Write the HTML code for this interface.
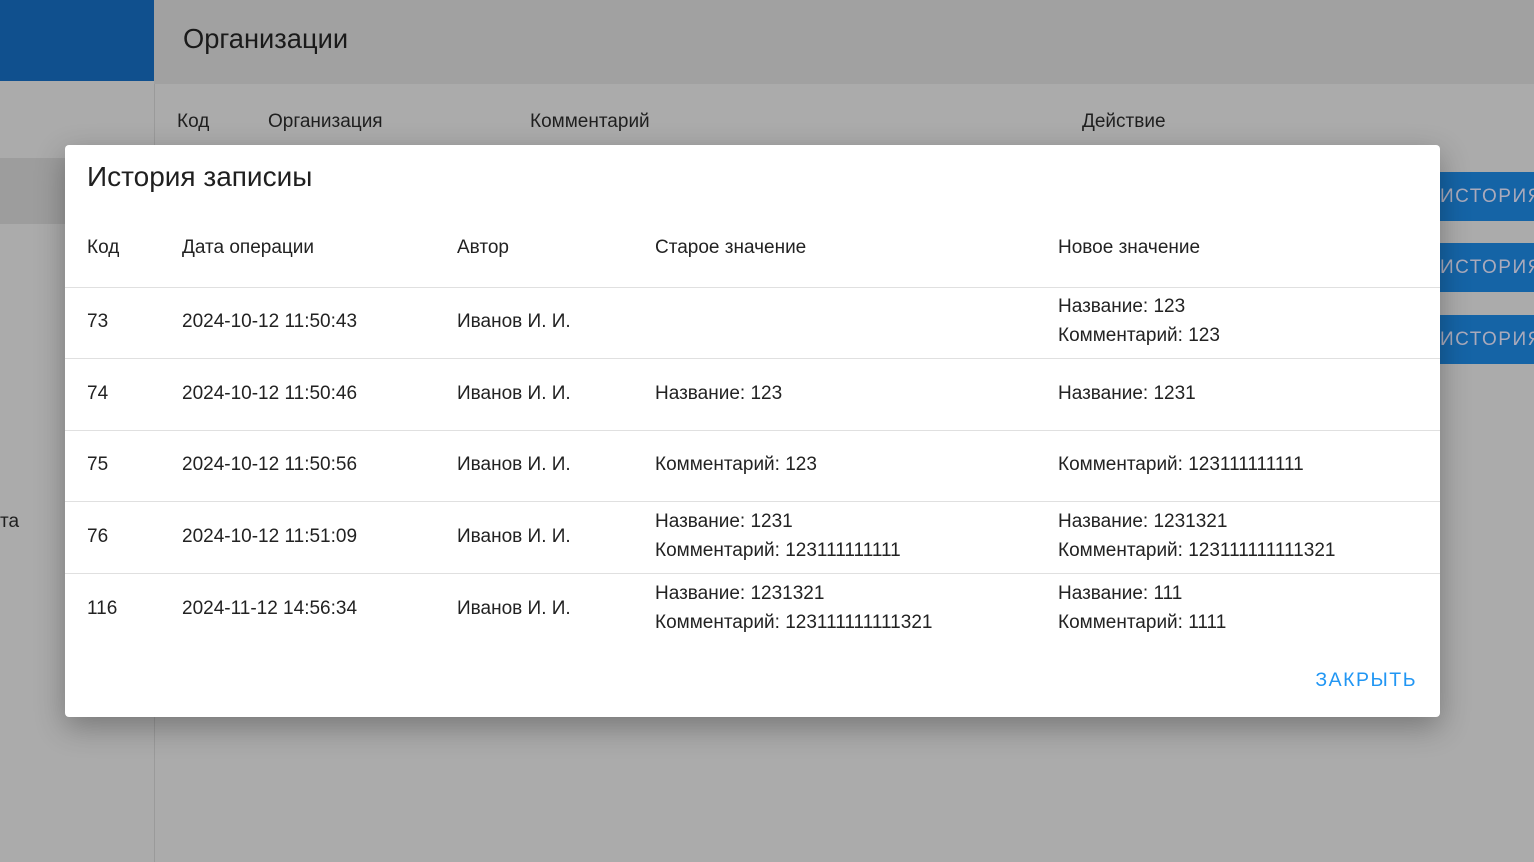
<!DOCTYPE html><html><head><style>
body{margin:0;width:1534px;height:862px;overflow:hidden;background:#ababab;font-family:"Liberation Sans",sans-serif;position:relative;color:#1f1f1f}
.a{position:absolute}
.row{position:absolute;left:0;right:0;border-top:1px solid #e0e0e0}
.c{position:absolute;font-size:19px;color:#222;line-height:29px}
</style></head><body>
<div class="a" style="left:0;top:0;width:154px;height:81px;background:#10508e"></div>
<div class="a" style="left:154px;top:0;right:0;height:84px;background:#a1a1a1"></div>
<div class="a" style="left:183px;top:23px;font-size:27.3px;color:#1a1a1a">Организации</div>
<div class="a" style="left:154px;top:84px;width:1px;bottom:0;background:#9a9a9a"></div>
<div class="a" style="left:0;top:158px;width:154px;height:66px;background:#9d9d9d"></div>
<div class="a" style="left:177px;top:111px;font-size:19px">Код</div>
<div class="a" style="left:268px;top:111px;font-size:19px">Организация</div>
<div class="a" style="left:530px;top:111px;font-size:19px">Комментарий</div>
<div class="a" style="left:1082px;top:111px;font-size:19px">Действие</div>
<div class="a" style="left:0;top:511px;font-size:19px">та</div>
<div class="a" style="left:1440px;top:172px;width:94px;height:49px;background:#1564a6;color:#aab;font-size:19px;letter-spacing:1.5px;line-height:49px">ИСТОРИЯ</div>
<div class="a" style="left:1440px;top:243px;width:94px;height:49px;background:#1564a6;color:#aab;font-size:19px;letter-spacing:1.5px;line-height:49px">ИСТОРИЯ</div>
<div class="a" style="left:1440px;top:315px;width:94px;height:49px;background:#1564a6;color:#aab;font-size:19px;letter-spacing:1.5px;line-height:49px">ИСТОРИЯ</div>
<div class="a" style="left:65px;top:145px;width:1375px;height:572px;background:#fff;border-radius:4px;box-shadow:0 10px 30px rgba(0,0,0,.3);overflow:hidden">
<div class="a" style="left:22px;top:16px;font-size:28px;color:#1f1f1f">История записиы</div>
<div class="c" style="left:22px;top:88px">Код</div>
<div class="c" style="left:117px;top:88px">Дата операции</div>
<div class="c" style="left:392px;top:88px">Автор</div>
<div class="c" style="left:590px;top:88px">Старое значение</div>
<div class="c" style="left:993px;top:88px">Новое значение</div>
<div class="row" style="top:142px;height:71px"><div class="c" style="left:22px;top:19px">73</div><div class="c" style="left:117px;top:19px">2024-10-12 11:50:43</div><div class="c" style="left:392px;top:19px">Иванов И. И.</div><div class="c" style="left:993px;top:4px">Название: 123<br>Комментарий: 123</div></div>
<div class="row" style="top:213px;height:71px"><div class="c" style="left:22px;top:20px">74</div><div class="c" style="left:117px;top:20px">2024-10-12 11:50:46</div><div class="c" style="left:392px;top:20px">Иванов И. И.</div><div class="c" style="left:590px;top:20px">Название: 123</div><div class="c" style="left:993px;top:20px">Название: 1231</div></div>
<div class="row" style="top:285px;height:71px"><div class="c" style="left:22px;top:19px">75</div><div class="c" style="left:117px;top:19px">2024-10-12 11:50:56</div><div class="c" style="left:392px;top:19px">Иванов И. И.</div><div class="c" style="left:590px;top:19px">Комментарий: 123</div><div class="c" style="left:993px;top:19px">Комментарий: 123111111111</div></div>
<div class="row" style="top:356px;height:71px"><div class="c" style="left:22px;top:20px">76</div><div class="c" style="left:117px;top:20px">2024-10-12 11:51:09</div><div class="c" style="left:392px;top:20px">Иванов И. И.</div><div class="c" style="left:590px;top:5px">Название: 1231<br>Комментарий: 123111111111</div><div class="c" style="left:993px;top:5px">Название: 1231321<br>Комментарий: 123111111111321</div></div>
<div class="row" style="top:428px;height:71px"><div class="c" style="left:22px;top:20px">116</div><div class="c" style="left:117px;top:20px">2024-11-12 14:56:34</div><div class="c" style="left:392px;top:20px">Иванов И. И.</div><div class="c" style="left:590px;top:5px">Название: 1231321<br>Комментарий: 123111111111321</div><div class="c" style="left:993px;top:5px">Название: 111<br>Комментарий: 1111</div></div>
<div class="a" style="right:23px;top:524px;font-size:19.5px;color:#2196f3;letter-spacing:1.5px">ЗАКРЫТЬ</div>
</div>
</body></html>
